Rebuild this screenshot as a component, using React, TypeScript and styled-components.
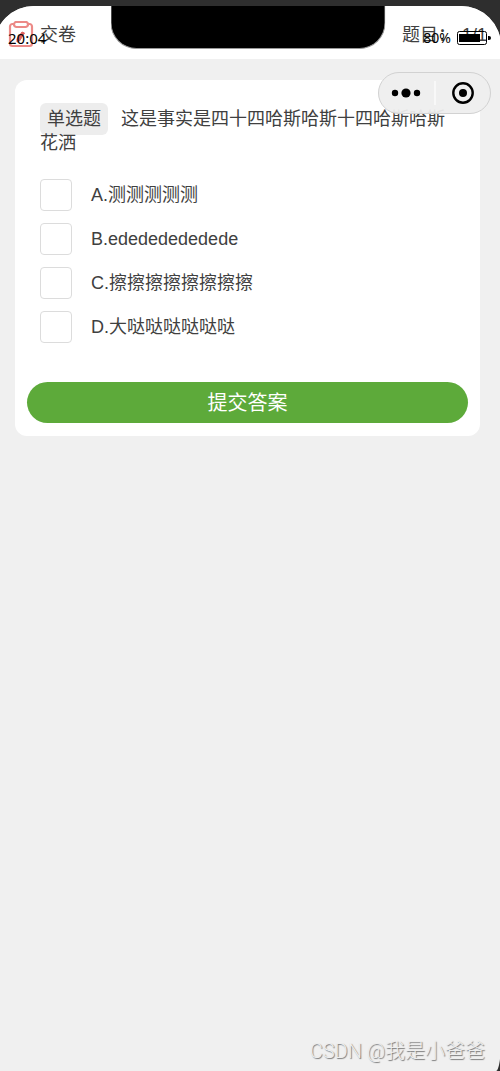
import React from "react";
import styled, { createGlobalStyle } from "styled-components";

const GlobalStyle = createGlobalStyle`
  * { box-sizing: border-box; }
  body {
    margin: 0;
    background: #2e2e2e;
    color: #404040;
    font-family: "Liberation Sans", "Noto Sans CJK SC", sans-serif;
    font-size: 18px;
    line-height: 24px;
  }
`;

const Phone = styled.div`
  padding-top: 6px;
  overflow: hidden;
`;

const Screen = styled.div`
  position: relative;
  min-height: calc(100vh - 6px);
  margin: 0 -1px 0 -6px;
  padding: 0 1px 0 6px;
  border-radius: 40px 40px 5px 0 / 40px 40px 30px 0;
  background: #f0f0f0;
  overflow: hidden;
`;

const Header = styled.header`
  display: flex;
  align-items: center;
  justify-content: space-between;
  height: 53px;
  margin: 0 -1px 0 -6px;
  padding: 5px 14px 0 14px;
  background: #fff;
`;

const HandIn = styled.button`
  display: flex;
  align-items: center;
  gap: 6px;
  padding: 0;
  border: 0;
  background: none;
  color: inherit;
  font: inherit;
`;

const Progress = styled.div`
  display: flex;
  gap: 6px;
`;

const Notch = styled.div`
  position: absolute;
  top: 0;
  left: 50%;
  width: 275px;
  height: 43px;
  transform: translateX(-50%);
  border: 1px solid #999;
  border-top: 0;
  border-radius: 0 0 26px 26px;
  background: #000;
`;

const StatusBar = styled.div`
  position: absolute;
  top: 20px;
  left: 14px;
  right: 10px;
  display: flex;
  align-items: center;
  justify-content: space-between;
  color: #000;
  font-family: "Noto Sans", sans-serif;
  font-size: 15px;
`;

const Battery = styled.div`
  display: flex;
  align-items: center;
  gap: 6px;
  font-size: 14px;
`;

const Capsule = styled.div`
  position: absolute;
  top: 66px;
  right: 10px;
  display: flex;
  align-items: center;
  width: 113px;
  height: 42px;
  border: 1px solid #d2d2d2;
  border-radius: 21px;
  background: rgba(238, 238, 238, 0.94);
`;

const CapsuleButton = styled.button`
  display: flex;
  flex: 1;
  align-items: center;
  justify-content: center;
  height: 24px;
  padding: 0;
  border: 0;
  background: none;
  color: #000;

  & + & { border-left: 2px solid #f8f8f8; }
`;

const Card = styled.form`
  margin: 21px 20px 0 15px;
  padding: 27px 12px 13px;
  border-radius: 12px;
  background: #fff;
`;

const Question = styled.p`
  margin: 0 13px 24px;
`;

const Tag = styled.span`
  margin-right: 13px;
  padding: 6px 7px;
  border-radius: 6px;
  background: #ededed;
`;

const Options = styled.div`
  display: flex;
  flex-direction: column;
  gap: 12px;
  margin: 0 13px 39px;
`;

const Option = styled.label`
  display: flex;
  align-items: center;
  gap: 19px;
`;

const Radio = styled.input`
  appearance: none;
  width: 32px;
  height: 32px;
  margin: 0;
  border: 1px solid #dcdcdc;
  border-radius: 4px;
  background: #fff;

  &:checked { background: #5daa3a; }
`;

const Submit = styled.button`
  display: block;
  width: 100%;
  height: 41px;
  padding: 0;
  border: 0;
  border-radius: 21px;
  background: #5daa3a;
  color: #fff;
  font: inherit;
  font-size: 20px;
`;

const Watermark = styled.div`
  position: absolute;
  right: 16px;
  bottom: 8px;
  color: #eee;
  font-family: Roboto, "Noto Sans CJK SC", sans-serif;
  font-size: 20px;
  font-weight: 300;
  text-shadow: 1px 1px 1px #777;
`;

const options = ["A.测测测测测", "B.edededededede", "C.擦擦擦擦擦擦擦擦", "D.大哒哒哒哒哒哒"];

const ClipboardIcon = () => (
  <svg width="26" height="28" viewBox="0 0 26 28" fill="none" stroke="#ec8a87" strokeWidth="2.2" strokeLinejoin="round" aria-hidden="true">
    <path d="M6 3H4.500a2.500 2.500 0 0 0-2.500 2.500V22.500a2.500 2.500 0 0 0 2.500 2.500h17a2.500 2.500 0 0 0 2.500-2.500V5.500a2.500 2.500 0 0 0-2.500-2.500H20" />
    <rect x="6" y="1" width="14" height="5" rx="2.5" />
    <path d="M14 11l2.500 1-5 8-2.500 1 0-3z" fill="#e0605c" stroke="#e0605c" strokeWidth="1" />
  </svg>
);

const BatteryIcon = () => (
  <svg width="34" height="14" viewBox="0 0 34 14" aria-hidden="true">
    <rect x="0.5" y="0.5" width="29" height="13" rx="2" fill="none" stroke="#000" />
    <rect x="2" y="3" width="21" height="8" />
    <path d="M31 5h1a2 2 0 0 1 0 4h-1z" />
  </svg>
);

const MoreIcon = () => (
  <svg width="30" height="10" viewBox="0 0 30 10" aria-hidden="true">
    <circle cx="4" cy="5" r="3.2" />
    <circle cx="15" cy="5" r="4.6" />
    <circle cx="26" cy="5" r="3.2" />
  </svg>
);

const CloseIcon = () => (
  <svg width="22" height="22" viewBox="0 0 22 22" aria-hidden="true">
    <circle cx="11" cy="11" r="9.7" fill="none" stroke="#000" strokeWidth="2.4" />
    <circle cx="11" cy="11" r="4" />
  </svg>
);

export default function App() {
  return (
    <Phone>
      <GlobalStyle />
      <Screen>
        <Header>
          <HandIn type="button">
            <ClipboardIcon />
            交卷
          </HandIn>
          <Progress>
            <span>题目：</span>
            <span>1/1</span>
          </Progress>
        </Header>
        <Card onSubmit={(event) => event.preventDefault()}>
          <Question id="question">
            <Tag>单选题</Tag>
            这是事实是四十四哈斯哈斯十四哈斯哈斯花洒
          </Question>
          <Options role="radiogroup" aria-labelledby="question">
            {options.map((option) => (
              <Option key={option}>
                <Radio type="radio" name="answer" value={option[0]} />
                {option}
              </Option>
            ))}
          </Options>
          <Submit type="submit">提交答案</Submit>
        </Card>
        <Notch />
        <StatusBar>
          <span>20:04</span>
          <Battery>
            80%
            <BatteryIcon />
          </Battery>
        </StatusBar>
        <Capsule>
          <CapsuleButton type="button" aria-label="更多">
            <MoreIcon />
          </CapsuleButton>
          <CapsuleButton type="button" aria-label="关闭">
            <CloseIcon />
          </CapsuleButton>
        </Capsule>
        <Watermark>CSDN @我是小爸爸</Watermark>
      </Screen>
    </Phone>
  );
}
